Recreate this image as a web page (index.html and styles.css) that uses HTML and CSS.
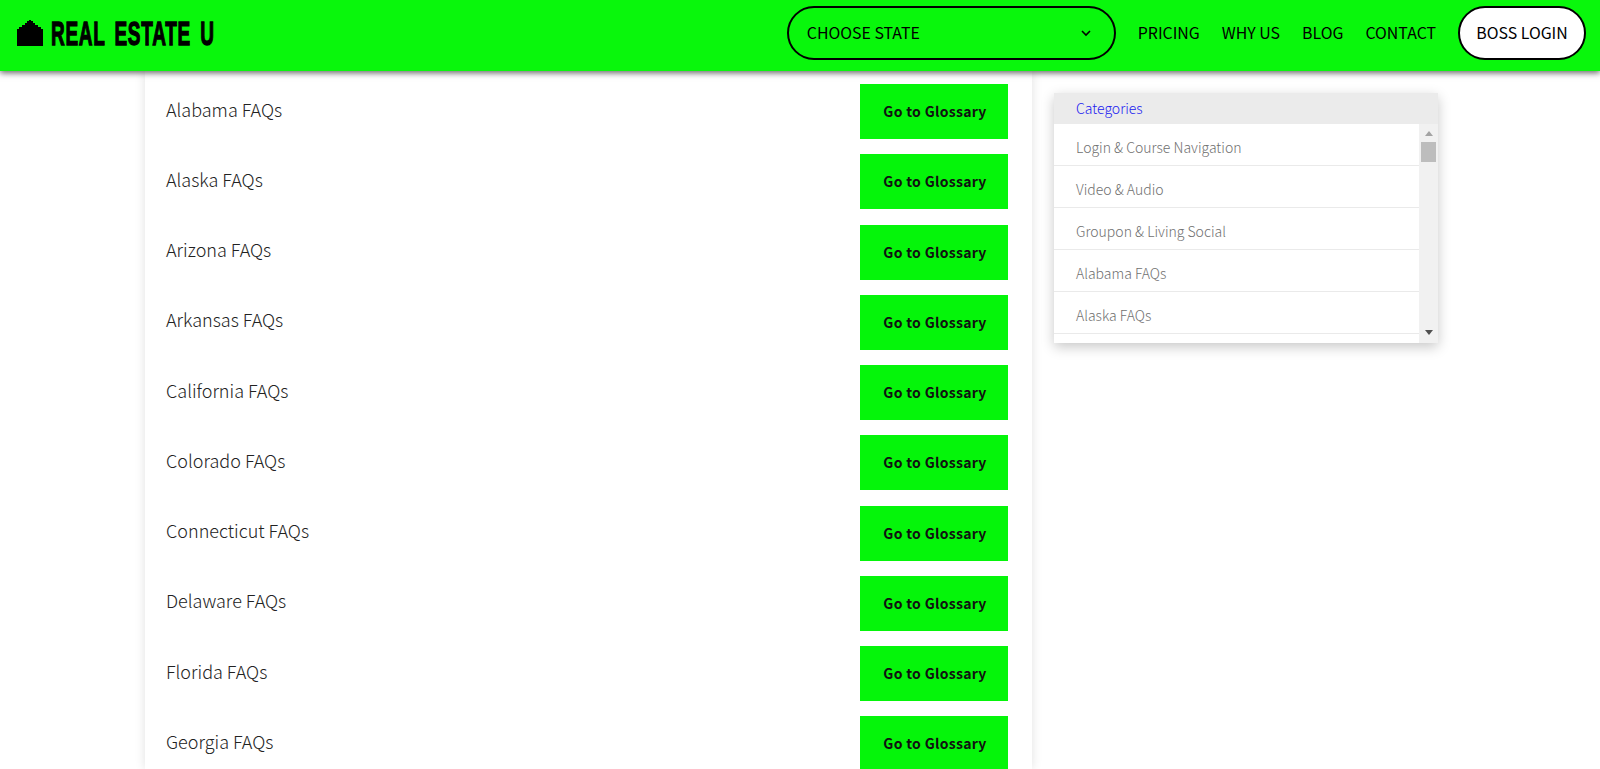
FILE: index.html
```html
<!DOCTYPE html>
<html lang="en">
<head>
<meta charset="utf-8">
<title>Real Estate U FAQs</title>
<link rel="stylesheet" href="styles.css">
</head>
<body>
<header class="topbar">
  <a class="logo" href="#">
    <svg class="logo-icon" viewBox="0 0 26 26" aria-hidden="true"><path d="M0 26V9h2V7h3V5h3V3h2V1h2V0h2v1h2v2h2v2h3v2h3v2h2v17z"/></svg>
    <span class="logo-text">REAL ESTATE U</span>
  </a>
  <nav class="nav">
    <div class="state-select">
      <span>CHOOSE STATE</span>
      <svg class="chev" viewBox="0 0 10 7" aria-hidden="true"><path d="M1 1l4 4 4-4"/></svg>
    </div>
    <a href="#">PRICING</a>
    <a href="#">WHY US</a>
    <a href="#">BLOG</a>
    <a href="#">CONTACT</a>
    <a class="login" href="#">BOSS LOGIN</a>
  </nav>
</header>
<main class="page">
  <section class="card">
    <div class="row"><span>Alabama FAQs</span><a class="btn" href="#">Go to Glossary</a></div>
    <div class="row"><span>Alaska FAQs</span><a class="btn" href="#">Go to Glossary</a></div>
    <div class="row"><span>Arizona FAQs</span><a class="btn" href="#">Go to Glossary</a></div>
    <div class="row"><span>Arkansas FAQs</span><a class="btn" href="#">Go to Glossary</a></div>
    <div class="row"><span>California FAQs</span><a class="btn" href="#">Go to Glossary</a></div>
    <div class="row"><span>Colorado FAQs</span><a class="btn" href="#">Go to Glossary</a></div>
    <div class="row"><span>Connecticut FAQs</span><a class="btn" href="#">Go to Glossary</a></div>
    <div class="row"><span>Delaware FAQs</span><a class="btn" href="#">Go to Glossary</a></div>
    <div class="row"><span>Florida FAQs</span><a class="btn" href="#">Go to Glossary</a></div>
    <div class="row"><span>Georgia FAQs</span><a class="btn" href="#">Go to Glossary</a></div>
  </section>
  <aside class="side">
    <div class="side-head">Categories</div>
    <div class="side-body">
      <ul class="side-list">
        <li>Login &amp; Course Navigation</li>
        <li>Video &amp; Audio</li>
        <li>Groupon &amp; Living Social</li>
        <li>Alabama FAQs</li>
        <li>Alaska FAQs</li>
      </ul>
      <div class="scrollbar" aria-hidden="true">
        <span class="arrow arrow-up"></span>
        <span class="thumb"></span>
        <span class="arrow arrow-down"></span>
      </div>
    </div>
  </aside>
</main>
</body>
</html>
```
FILE: styles.css
```css
* { box-sizing: border-box; }
html, body { height: 100%; }
body {
  margin: 0;
  overflow: hidden;
  background: #fff;
  font-family: "Noto Sans CJK JP", "Noto Sans", sans-serif;
  color: #222;
}
a { color: inherit; text-decoration: none; }

.topbar {
  position: relative;
  z-index: 2;
  height: 71px;
  display: flex;
  align-items: center;
  justify-content: space-between;
  padding: 0 14px 5px 17px;
  background: #09f70c;
  box-shadow: 0 2px 6px rgba(0, 0, 0, 0.6);
  color: #000;
}
.logo { display: flex; align-items: center; gap: 8px; }
.logo-icon { width: 26px; height: 26px; fill: #000; display: block; }
.logo-text {
  font-family: "Liberation Sans", sans-serif;
  font-weight: 700;
  font-size: 34px;
  line-height: 30px;
  letter-spacing: 1.2px;
  word-spacing: 6px;
  -webkit-text-stroke: 1.3px #000;
  display: inline-block;
  white-space: nowrap;
  transform: scaleX(0.56);
  transform-origin: left center;
  width: 162px;
}
.nav { display: flex; align-items: center; gap: 22px; font-size: 15.9px; line-height: 22px; }
.state-select {
  width: 329px;
  height: 54px;
  display: flex;
  align-items: center;
  justify-content: space-between;
  padding: 0 23px 0 18px;
  border: 2px solid #000;
  border-radius: 27px;
}
.chev { width: 10px; height: 7px; fill: none; stroke: #000; stroke-width: 1.6; display: block; }
.login {
  width: 128px;
  height: 54px;
  display: flex;
  align-items: center;
  justify-content: center;
  background: #fff;
  border: 2px solid #000;
  border-radius: 27px;
}

.page {
  height: calc(100vh - 71px);
  overflow: hidden;
  display: flex;
  align-items: flex-start;
  gap: 22px;
  padding-left: 145px;
}
.card {
  width: 887px;
  height: 100%;
  padding: 13px 24px 0 21px;
  background: #fff;
  box-shadow: 0 0 10px rgba(0, 0, 0, 0.12);
  display: flex;
  flex-direction: column;
  gap: 15.27px;
  flex: none;
}
.row {
  height: 55px;
  flex: none;
  display: flex;
  align-items: center;
  justify-content: space-between;
  font-size: 18px;
  font-weight: 300;
  line-height: 26px;
  color: #222;
}
.row > span { padding-bottom: 6px; }
.btn {
  width: 148px;
  height: 55px;
  display: flex;
  align-items: center;
  justify-content: center;
  padding: 0 0 1px 2px;
  background: #05f50a;
  color: #111;
  font-size: 14px;
  font-weight: 700;
  letter-spacing: 0.3px;
}

.side {
  width: 384px;
  margin-top: 22px;
  flex: none;
  box-shadow: 0 4px 12px rgba(0, 0, 0, 0.22);
  background: #fff;
}
.side-head {
  height: 31px;
  padding-left: 22px;
  font-size: 14px;
  font-weight: 300;
  line-height: 30px;
  color: #2020f0;
  background: #ebebeb;
}
.side-body { display: flex; height: 219px; }
.side-list {
  list-style: none;
  margin: 0;
  padding: 0;
  flex: 1;
  font-size: 14px;
  font-weight: 300;
  color: #707070;
}
.side-list li {
  height: 42px;
  padding-left: 22px;
  line-height: 47px;
  border-bottom: 1px solid #eaeaea;
}
.scrollbar {
  width: 19px;
  flex: none;
  display: flex;
  flex-direction: column;
  align-items: center;
  padding: 7px 0 8px;
  background: #f1f1f1;
}
.thumb { width: 15px; height: 20px; margin-top: 6px; background: #bdbdbd; }
.arrow { width: 0; height: 0; border-left: 4.5px solid transparent; border-right: 4.5px solid transparent; }
.arrow-up { border-bottom: 5px solid #a3a3a3; }
.arrow-down { margin-top: auto; border-top: 5px solid #505050; }
```
